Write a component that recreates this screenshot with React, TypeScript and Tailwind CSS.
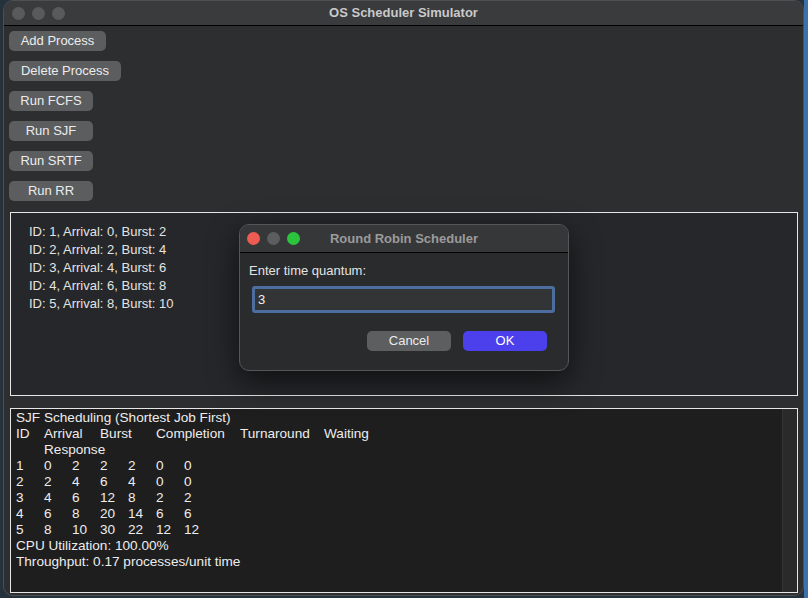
import React from 'react';

const processes = [
  { id: 1, arrival: 0, burst: 2 },
  { id: 2, arrival: 2, burst: 4 },
  { id: 3, arrival: 4, burst: 6 },
  { id: 4, arrival: 6, burst: 8 },
  { id: 5, arrival: 8, burst: 10 },
];

// id, arrival, burst, completion, turnaround, waiting, response
const results = [
  [1, 0, 2, 2, 2, 0, 0],
  [2, 2, 4, 6, 4, 0, 0],
  [3, 4, 6, 12, 8, 2, 2],
  [4, 6, 8, 20, 14, 6, 6],
  [5, 8, 10, 30, 22, 12, 12],
];

const buttons = [
  { label: 'Add Process', width: 'w-[97px]' },
  { label: 'Delete Process', width: 'w-[112px]' },
  { label: 'Run FCFS', width: 'w-[84px]' },
  { label: 'Run SJF', width: 'w-[84px]' },
  { label: 'Run SRTF', width: 'w-[84px]' },
  { label: 'Run RR', width: 'w-[84px]' },
];

const Light: React.FC<{ color: string }> = ({ color }) => (
  <span className={`block w-[13px] h-[13px] rounded-full ${color}`} />
);

const App: React.FC = () => {
  return (
    <div
      className="relative w-[808px] h-[598px] flex bg-[#26323b] overflow-hidden"
      style={{ fontFamily: '"Liberation Sans", Arial, sans-serif' }}
    >
      <div className="w-[3px] shrink-0" />

      {/* Main window */}
      <div className="flex-1 h-[596px] flex flex-col bg-[#2c2e30] border border-[#4d4f51] rounded-[10px] overflow-hidden">
        <div className="relative h-[25px] shrink-0 flex items-center bg-[#3a3b3d] border-b border-black">
          <div className="flex gap-[7px] pl-[8px]">
            <Light color="bg-[#595a5c]" />
            <Light color="bg-[#595a5c]" />
            <Light color="bg-[#595a5c]" />
          </div>
          <div className="absolute inset-0 flex items-center justify-center text-[13px] font-bold text-[#c9c9c9]">
            OS Scheduler Simulator
          </div>
        </div>

        <div className="flex flex-col gap-[10px] pt-[5px] pl-[5px]">
          {buttons.map((b) => (
            <button
              key={b.label}
              className={`${b.width} h-[20px] rounded-[5px] bg-[#5b5d5f] text-[13px] text-[#ececec] leading-[20px] text-center`}
            >
              {b.label}
            </button>
          ))}
        </div>

        {/* Process list */}
        <div className="mt-[11px] ml-[6px] mr-[5px] h-[184px] border border-[#e6e6e6] bg-[#25272a] pt-[10px] pl-[18px]">
          {processes.map((p) => (
            <div key={p.id} className="text-[13px] leading-[18px] text-[#e4e4e4]">
              ID: {p.id}, Arrival: {p.arrival}, Burst: {p.burst}
            </div>
          ))}
        </div>

        {/* Result output */}
        <div className="mt-[12px] ml-[6px] mr-[5px] h-[185px] border border-[#e6e6e6] bg-[#1e1e1e] flex">
          <div className="flex-1 pl-[5px] pt-[1px] text-[13.6px] leading-[16px] text-[#ededed]">
            <div>SJF Scheduling (Shortest Job First)</div>
            <div className="flex">
              <span className="w-[28px]">ID</span>
              <span className="w-[56px]">Arrival</span>
              <span className="w-[56px]">Burst</span>
              <span className="w-[84px]">Completion</span>
              <span className="w-[84px]">Turnaround</span>
              <span>Waiting</span>
            </div>
            <div className="pl-[28px]">Response</div>
            {results.map((row) => (
              <div key={row[0]} className="flex">
                {row.map((v, i) => (
                  <span key={i} className="w-[28px]">
                    {v}
                  </span>
                ))}
              </div>
            ))}
            <div>CPU Utilization: 100.00%</div>
            <div>Throughput: 0.17 processes/unit time</div>
          </div>
          <div className="w-[15px] bg-[#2a2a2a] border-l border-[#343434]" />
        </div>
      </div>

      <div className="w-[4px] shrink-0 bg-[#3d70ab]" />

      {/* Round Robin dialog */}
      <div className="absolute left-[239px] top-[224px] w-[330px] h-[147px] flex flex-col rounded-[10px] bg-[#2a2b2d] border border-[#555658] shadow-[0_10px_30px_rgba(0,0,0,0.6)] overflow-hidden">
        <div className="relative h-[28px] shrink-0 flex items-center bg-[#363739] border-b border-black">
          <div className="flex gap-[7px] pl-[7px]">
            <Light color="bg-[#ee5b53]" />
            <Light color="bg-[#5c5d5f]" />
            <Light color="bg-[#2cc33d]" />
          </div>
          <div className="absolute inset-0 flex items-center justify-center text-[13px] font-bold text-[#9b9b9b]">
            Round Robin Scheduler
          </div>
        </div>
        <div className="pl-[9px] pt-[10px] text-[13px] leading-[16px] text-[#e4e4e4]">Enter time quantum:</div>
        <div className="mt-[7px] ml-[12px] mr-[13px] h-[27px] rounded-[3px] border-[3px] border-[#4b6e9f] bg-[#323436] flex items-center pl-[3px] text-[13px] text-[#f0f0f0]">
          3
        </div>
        <div className="flex justify-end gap-[12px] mt-[18px] mr-[21px]">
          <button className="w-[84px] h-[20px] rounded-[5px] bg-[#5d5e60] text-[13px] text-[#ececec] leading-[20px]">
            Cancel
          </button>
          <button className="w-[84px] h-[20px] rounded-[5px] bg-[#4b40ec] text-[13px] text-white leading-[20px]">
            OK
          </button>
        </div>
      </div>
    </div>
  );
};

export default App;
